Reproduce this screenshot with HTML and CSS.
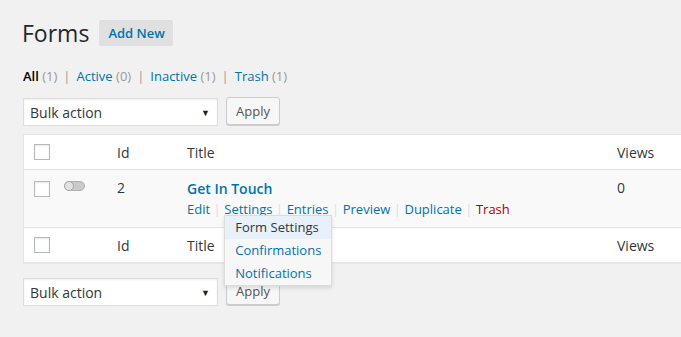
FILE: index.html
```html
<!DOCTYPE html>
<html lang="en">
<head>
    <meta charset="UTF-8">
    <title>Forms</title>
    <link rel="stylesheet" href="styles.css">
</head>
<body>
    <div class="wrap">
        <div class="page-head">
            <h1>Forms</h1>
            <a class="add-new" href="#">Add New</a>
        </div>

        <ul class="subsubsub">
            <li class="current">All <span class="count">(1)</span></li>
            <li class="sep">|</li>
            <li><a href="#">Active</a> <span class="count">(0)</span></li>
            <li class="sep">|</li>
            <li><a href="#">Inactive</a> <span class="count">(1)</span></li>
            <li class="sep">|</li>
            <li><a href="#">Trash</a> <span class="count">(1)</span></li>
        </ul>

        <div class="tablenav">
            <div class="select">Bulk action<span class="arrow">&#9660;</span></div>
            <button class="button">Apply</button>
        </div>

        <div class="list-table">
            <div class="row head-row">
                <span class="cb"></span>
                <span></span>
                <span>Id</span>
                <span>Title</span>
                <span>Views</span>
            </div>
            <div class="row body-row">
                <span class="cb"></span>
                <span class="toggle"><i></i></span>
                <span>2</span>
                <div class="title-cell">
                    <a class="row-title" href="#">Get In Touch</a>
                    <div class="row-actions">
                        <a href="#">Edit</a>
                        <span class="bar">|</span>
                        <span class="has-menu">
                            <a href="#">Settings</a>
                            <ul class="dropdown">
                                <li class="active">Form Settings</li>
                                <li>Confirmations</li>
                                <li>Notifications</li>
                            </ul>
                        </span>
                        <span class="bar">|</span>
                        <a href="#">Entries</a>
                        <span class="bar">|</span>
                        <a href="#">Preview</a>
                        <span class="bar">|</span>
                        <a href="#">Duplicate</a>
                        <span class="bar">|</span>
                        <a class="trash" href="#">Trash</a>
                    </div>
                </div>
                <span>0</span>
            </div>
            <div class="row head-row foot-row">
                <span class="cb"></span>
                <span></span>
                <span>Id</span>
                <span>Title</span>
                <span>Views</span>
            </div>
        </div>

        <div class="tablenav bottom">
            <div class="select">Bulk action<span class="arrow">&#9660;</span></div>
            <button class="button">Apply</button>
        </div>
    </div>
</body>
</html>
```

FILE: styles.css
```css
/* Page */
body {
    margin: 0;
    background: #f1f1f1;
    color: #444;
    font-family: "Open Sans", sans-serif;
    font-size: 13px;
    overflow: hidden;
}

a {
    color: #0073aa;
    text-decoration: none;
}

.wrap {
    padding: 20px 0 0 23px;
}

/* Heading */
.page-head {
    display: flex;
    align-items: center;
    height: 26px;
}

.page-head h1 {
    margin: 0 10px 0 -1px;
    font-size: 23px;
    font-weight: 400;
    line-height: 26px;
    color: #23282d;
}

.add-new {
    background: #e0e0e0;
    padding: 0 8px 0 9px;
    height: 26px;
    line-height: 26px;
    font-weight: 600;
    font-size: 13px;
    border-radius: 2px;
}

/* Status links */
.subsubsub {
    display: flex;
    list-style: none;
    margin: 20px 0 0;
    padding: 0;
    line-height: 20px;
    color: #666;
}

.subsubsub .current {
    color: #000;
    font-weight: 600;
}

.subsubsub .count {
    color: #999;
    font-weight: 400;
}

.subsubsub .sep {
    color: #999;
    padding: 0 6px;
}

/* Bulk actions */
.tablenav {
    display: flex;
    align-items: flex-start;
    margin-top: 11px;
}

.tablenav.bottom {
    margin-top: 14px;
}

.select {
    box-sizing: border-box;
    width: 195px;
    height: 28px;
    margin-top: 1px;
    padding: 0 6px;
    display: flex;
    align-items: center;
    justify-content: space-between;
    background: #fff;
    border: 1px solid #ddd;
    font-size: 14px;
    color: #32373c;
    box-shadow: inset 0 1px 2px rgba(0, 0, 0, 0.07);
}

.select .arrow {
    font-size: 9px;
    color: #222;
    margin-right: 1px;
}

.button {
    margin-left: 8px;
    height: 28px;
    padding: 0 9px;
    background: #f7f7f7;
    border: 1px solid #ccc;
    border-radius: 3px;
    box-shadow: 0 1px 0 #ccc;
    color: #555;
    font-family: inherit;
    font-size: 13px;
}

/* Table */
.list-table {
    margin-top: 8px;
    margin-right: -20px;
    background: #fff;
    border: 1px solid #e5e5e5;
    box-shadow: 0 1px 1px rgba(0, 0, 0, 0.04);
}

.row {
    display: grid;
    grid-template-columns: 30px 53px 70px 430px 1fr;
    padding-left: 10px;
    font-size: 14px;
    color: #32373c;
}

.head-row {
    height: 34px;
    align-items: center;
    border-bottom: 1px solid #e1e1e1;
}

.foot-row {
    border-bottom: none;
    border-top: 1px solid #e1e1e1;
}

.body-row {
    background: #f9f9f9;
    height: 57px;
    padding-top: 9px;
    box-sizing: border-box;
    align-items: start;
    line-height: 18px;
}

.cb {
    box-sizing: border-box;
    width: 16px;
    height: 16px;
    background: #fff;
    border: 1px solid #b4b9be;
    box-shadow: inset 0 1px 2px rgba(0, 0, 0, 0.1);
}

.body-row .cb {
    margin-top: 2px;
}

/* Active toggle */
.toggle {
    box-sizing: border-box;
    width: 21px;
    height: 10px;
    margin-top: 2px;
    border: 1px solid #b0b0b0;
    border-radius: 5px;
    background: #cacaca;
    position: relative;
}

.toggle i {
    position: absolute;
    top: -1px;
    left: -1px;
    box-sizing: border-box;
    width: 10px;
    height: 10px;
    border-radius: 50%;
    border: 1px solid #a8a8a8;
    background: #e2e2e2;
}

.row-title {
    display: block;
    font-weight: 600;
    font-size: 14px;
    line-height: 19px;
}

.row-actions {
    display: flex;
    margin-top: 2px;
    font-size: 13px;
    line-height: 18px;
    white-space: nowrap;
}

.row-actions .bar {
    color: #ddd;
    padding: 0 3.5px;
}

.row-actions .trash {
    color: #a00;
}

/* Settings menu */
.has-menu {
    position: relative;
}

.dropdown {
    position: absolute;
    left: 0;
    top: 15px;
    z-index: 2;
    width: 106px;
    margin: 0;
    padding: 0;
    list-style: none;
    background: #f7f7f7;
    border: 1px solid #dcdcdc;
    box-shadow: 0 2px 4px rgba(0, 0, 0, 0.12);
}

.dropdown li {
    height: 23px;
    line-height: 23px;
    padding-left: 10px;
    color: #0073aa;
}

.dropdown li.active {
    background: #e8f1f9;
    color: #32373c;
}
```
